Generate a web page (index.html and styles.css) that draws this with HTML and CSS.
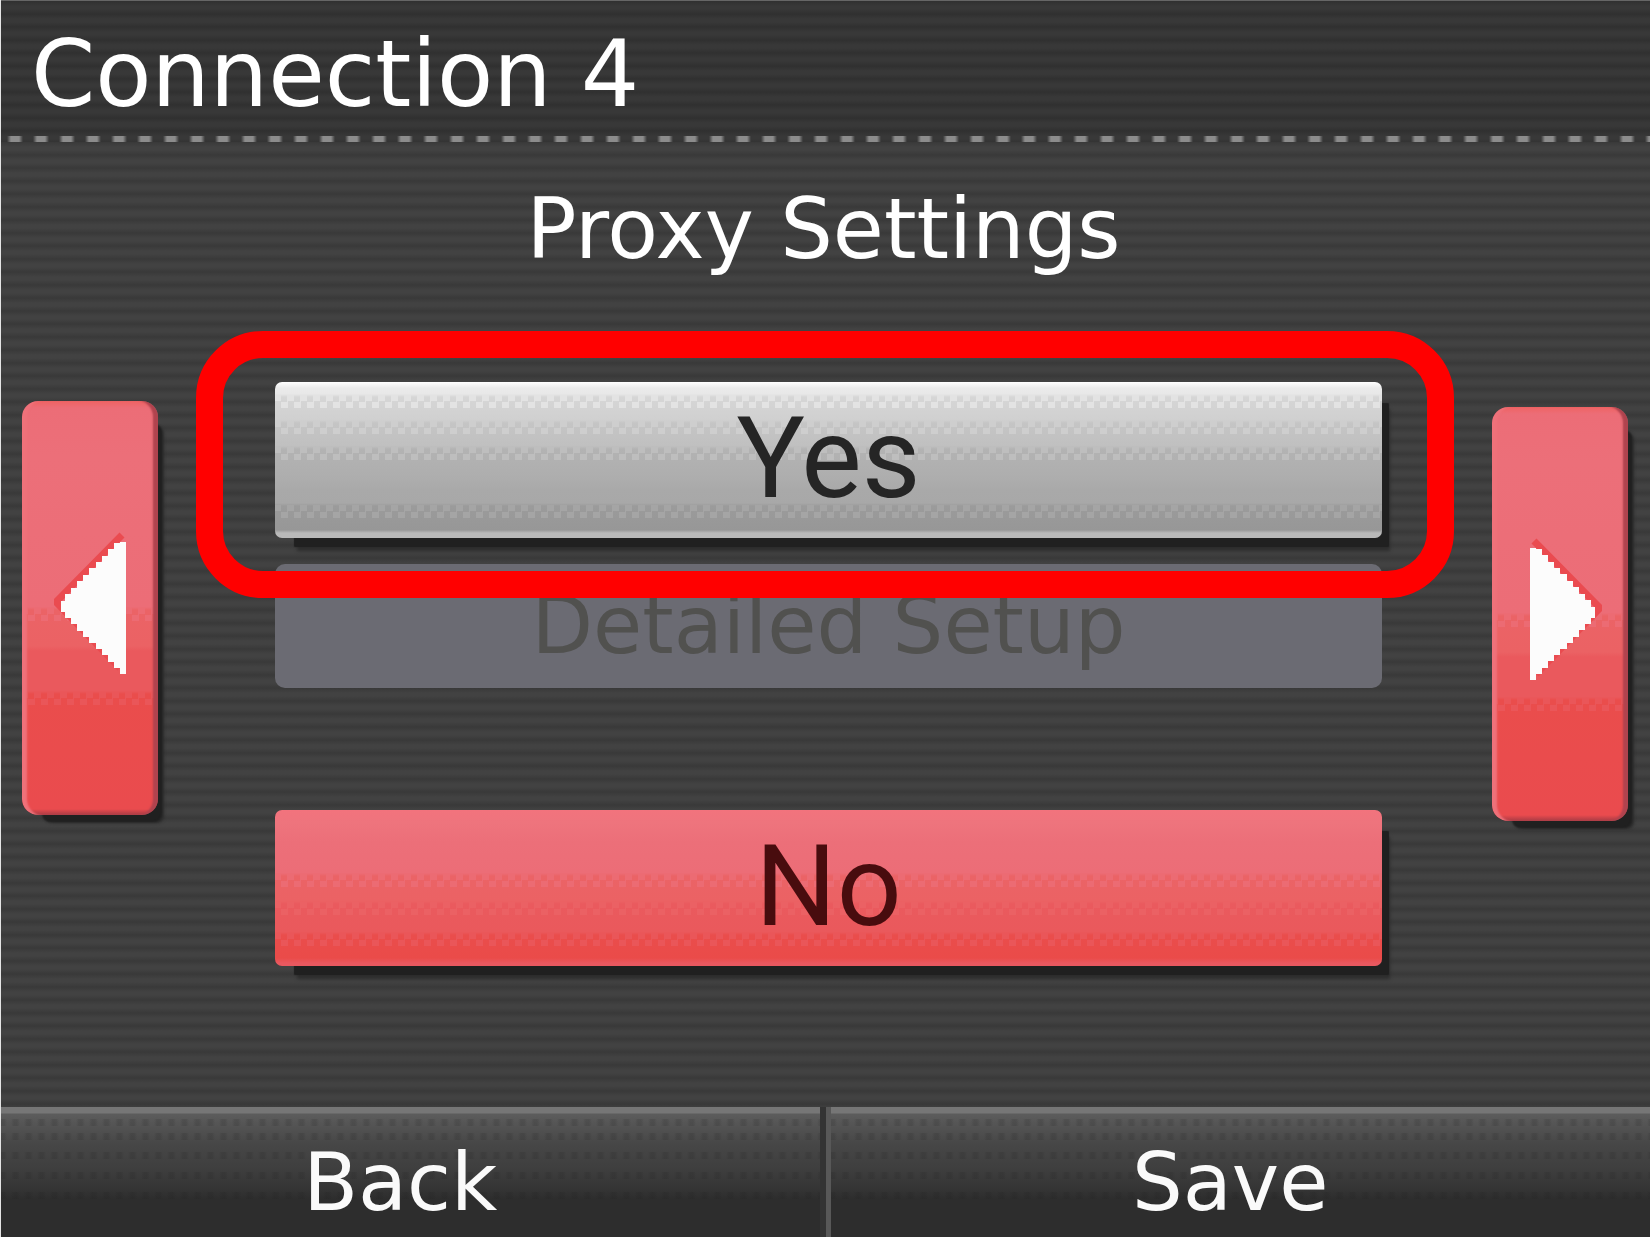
FILE: index.html
```
<!DOCTYPE html>
<html lang="en">
<head>
<meta charset="utf-8">
<meta name="viewport" content="width=device-width, initial-scale=1">
<title>Connection 4 - Proxy Settings</title>
<link rel="stylesheet" href="styles.css">
</head>
<body>
<header class="topbar">
  <h1 class="title">Connection 4</h1>
</header>
<main class="panel">
  <h2 class="subtitle">Proxy Settings</h2>
  <div class="pager">
    <button class="side prev" type="button" aria-label="Previous page">
      <svg class="arrow" viewBox="0 0 72 144" aria-hidden="true">
        <path d="M68 3 L2 70 L66 136" fill="none" stroke="#ea4b50" stroke-width="7"/>
        <path d="M66 10h6v132h-6v-6h-6v-6h-6v-7h-6v-6h-6v-6h-7v-6h-6v-6h-6v-7h-6v-6h-6v-6h-4v-11h4v-7h6v-6h6v-7h6v-6h6v-7h7v-6h6v-6h6v-7h6v-6h6z" fill="#fcfcfc"/>
      </svg>
    </button>
    <div class="choices">
      <div class="pick">
        <button class="choice yes" type="button">Yes</button>
        <span class="ring"></span>
      </div>
      <button class="detail" type="button" disabled>Detailed Setup</button>
      <button class="choice no" type="button">No</button>
    </div>
    <button class="side next" type="button" aria-label="Next page">
      <svg class="arrow" viewBox="0 0 72 144" aria-hidden="true">
        <g transform="matrix(-1 0 0 1 72 0)">
          <path d="M68 3 L2 70 L66 136" fill="none" stroke="#ea4b50" stroke-width="7"/>
          <path d="M66 10h6v132h-6v-6h-6v-6h-6v-7h-6v-6h-6v-6h-7v-6h-6v-6h-6v-7h-6v-6h-6v-6h-4v-11h4v-7h6v-6h6v-7h6v-6h6v-7h7v-6h6v-6h6v-7h6v-6h6z" fill="#fcfcfc"/>
        </g>
      </svg>
    </button>
  </div>
</main>
<footer class="actions">
  <button class="action" type="button">Back</button>
  <button class="action" type="button">Save</button>
</footer>
</body>
</html>
```
FILE: styles.css
```
* {
  box-sizing: border-box;
}

body {
  margin: 0;
  min-height: 100vh;
  display: flex;
  flex-direction: column;
  border-left: 1px solid #e4e4e4;
  background: #3c3c3c;
  color: #fff;
  font-family: "DejaVu Sans", sans-serif;
}

button {
  border: 0;
  padding: 0;
  font-family: inherit;
  cursor: pointer;
}

/* header */
.topbar {
  height: 142px;
  padding: 24px 30px 0;
  border-top: 1px solid #666;
  background:
    repeating-linear-gradient(90deg, transparent 0 6px, #8c8c8c 10px 18px, transparent 22px 26px) 0 100% / 100% 6px no-repeat,
    repeating-linear-gradient(#303030 0, #383838 5px, #383838 8px, #303030 13px);
}

.title {
  margin: 0;
  font-size: 92px;
  line-height: 100px;
  font-weight: 400;
}

/* body */
.panel {
  flex: 1;
  background: repeating-linear-gradient(#393939 0, #424242 5px, #424242 8px, #393939 13px);
}

.subtitle {
  margin: 0;
  height: 240px;
  padding: 38px 4px 0 0;
  font-size: 83px;
  line-height: 100px;
  font-weight: 400;
  text-align: center;
}

.pager {
  display: grid;
  grid-template-columns: 136px minmax(0, 1fr) 136px;
  padding: 0 22px 0 21px;
}

.choices {
  display: flex;
  flex-direction: column;
  padding: 0 110px 0 117px;
}

.pick {
  position: relative;
  display: flex;
  flex-direction: column;
}

.choice {
  height: 156px;
  border-radius: 7px;
  font-family: Roboto, sans-serif;
  font-size: 114px;
  line-height: 128px;
  padding-bottom: 4px;
  box-shadow: 13px 15px 1px -6px #202020, 15px 20px 3px -7px #2e2e2e;
}

.yes {
  --light: conic-gradient(#e3e3e3 25%, transparent 0 50%, #e3e3e3 0 75%, transparent 0);
  --mid: conic-gradient(#cecece 25%, transparent 0 50%, #cecece 0 75%, transparent 0);
  --soft: conic-gradient(#bebebe 25%, transparent 0 50%, #bebebe 0 75%, transparent 0);
  --dark: conic-gradient(#a5a5a5 25%, transparent 0 50%, #a5a5a5 0 75%, transparent 0);
  color: #252525;
  background:
    var(--light) 6px 13px / 13px 13px repeat-x,
    var(--mid) 6px 39px / 13px 13px repeat-x,
    var(--soft) 6px 65px / 13px 13px repeat-x,
    var(--dark) 6px 123px / 13px 13px repeat-x,
    linear-gradient(#fff 0, #ebebeb 6px, #e8e8e8 12px, #d6d6d6 15px, #d0d0d0 38px, #c5c5c5 41px, #c0c0c0 64px, #b3b3b3 67px, #aeaeae 94px, #a9a9a9 108px, #a8a8a8 121px, #9b9b9b 124px, #979797 148px, #b9b9b9 151px);
}

.no {
  --rose: conic-gradient(#ec6b73 25%, transparent 0 50%, #ec6b73 0 75%, transparent 0);
  --coral: conic-gradient(#eb6164 25%, transparent 0 50%, #eb6164 0 75%, transparent 0);
  --brick: conic-gradient(#ea5659 25%, transparent 0 50%, #ea5659 0 75%, transparent 0);
  margin-top: 122px;
  color: #480c0e;
  background:
    var(--rose) 6px 64px / 13px 13px repeat-x,
    var(--coral) 6px 92px / 13px 13px repeat-x,
    var(--brick) 6px 123px / 13px 13px repeat-x,
    linear-gradient(#f2737d 0, #ee747d 13px, #ec6f79 32px, #ec6d77 63px, #eb6366 66px, #eb6264 91px, #ea5a5e 94px, #ea595c 122px, #ea4d4c 125px, #ea4b49 148px, #e9585f 153px);
}

.detail {
  height: 124px;
  margin-top: 26px;
  border-radius: 10px;
  background: #6b6b73;
  color: #51514f;
  font-size: 80px;
  line-height: 100px;
}

/* marker drawn over the recommended answer */
.ring {
  position: absolute;
  inset: -51px -72px -60px -79px;
  border: 27px solid #f00;
  border-radius: 67px;
  pointer-events: none;
}

.side {
  --coral: conic-gradient(#ec6b73 25%, transparent 0 50%, #ec6b73 0 75%, transparent 0);
  --brick: conic-gradient(#ea5659 25%, transparent 0 50%, #ea5659 0 75%, transparent 0);
  height: 414px;
  margin-top: 19px;
  padding: 0 32px 8px;
  display: flex;
  align-items: center;
  border-radius: 16px;
  background:
    var(--coral) 6px 207px / 13px 13px repeat-x,
    var(--brick) 6px 291px / 13px 13px repeat-x,
    linear-gradient(#ef6363 0, #ec6d77 7px, #ec6f79 56px, #ec6d77 206px, #eb6366 209px, #eb6264 245px, #ea595d 250px, #ea595d 290px, #ea4d4c 293px, #ea4b4e 408px, #a83b44 414px);
  box-shadow: inset 6px 0 2px -1px #ef717a, inset -6px 0 2px -1px #b0434e, 12px 15px 2px -8px #202020, 15px 17px 3px -9px #2c2c2c;
}

.next {
  margin-top: 25px;
  padding-left: 38px;
}

.arrow {
  flex: none;
  width: 72px;
  height: 144px;
}

/* footer */
.actions {
  display: grid;
  grid-template-columns: 1fr 1fr;
  height: 130px;
}

.action {
  --dots: repeating-linear-gradient(90deg, rgba(30, 30, 30, .16) 0 3px, transparent 6px 10px, rgba(30, 30, 30, .16) 13px);
  padding: 22px 20px 0 0;
  background:
    var(--dots) 0 12px / 100% 7px no-repeat,
    var(--dots) 0 26px / 100% 7px no-repeat,
    var(--dots) 0 45px / 100% 7px no-repeat,
    var(--dots) 0 65px / 100% 7px no-repeat,
    var(--dots) 0 85px / 100% 7px no-repeat,
    linear-gradient(#767676 0 6px, #5c5c5c 7px, #474747 36px, #3f3f3f 60px, #333 84px, #2d2d2d 92px, #2d2d2d);
  color: #fafafa;
  font-size: 80px;
  line-height: 100px;
}

.action:first-child {
  border-right: 6px solid #333;
}

.action:last-child {
  border-left: 5px solid #585858;
}
```
